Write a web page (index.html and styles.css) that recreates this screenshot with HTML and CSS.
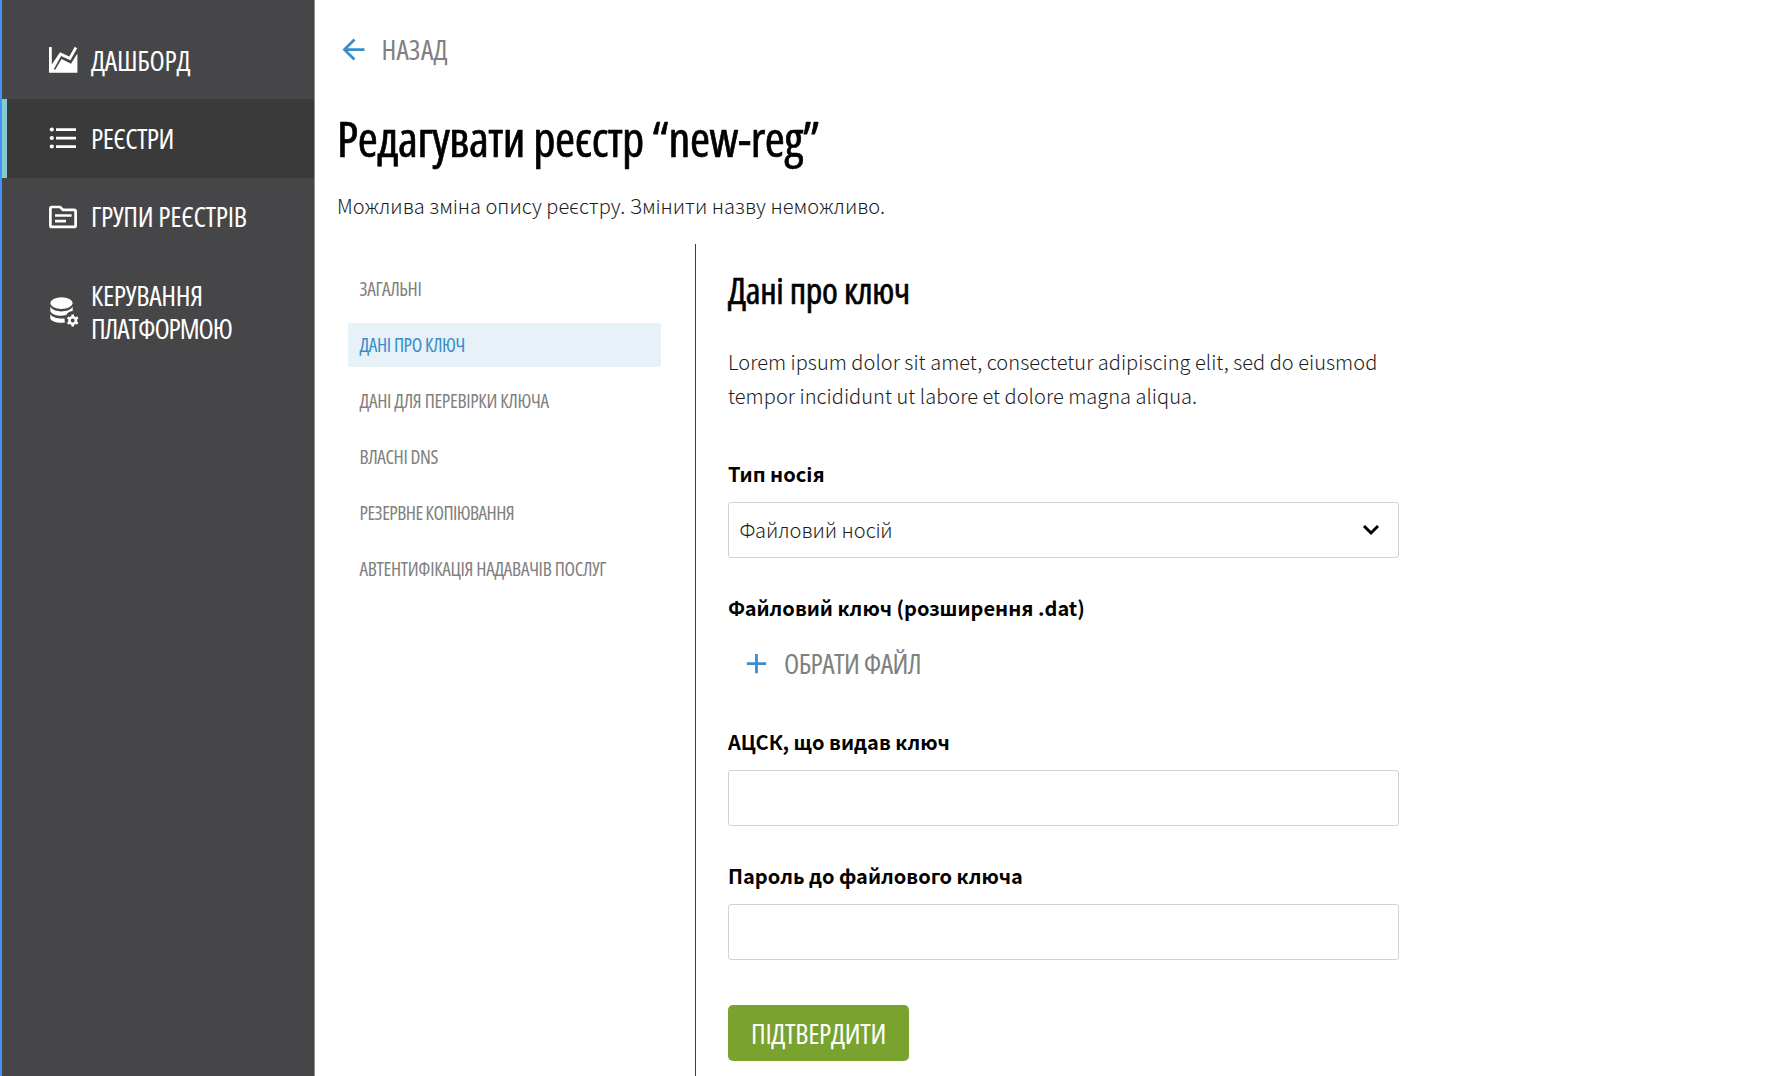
FILE: index.html
```html
<!DOCTYPE html>
<html lang="uk">
<head>
<meta charset="utf-8">
<title>Редагувати реєстр</title>
<link rel="stylesheet" href="styles.css">
</head>
<body>
<div class="app">
  <nav class="sidebar">
    <a class="nav-item"><svg class="nav-icon" viewBox="0 0 34 34"><path d="M3 4h2.800v17.500L14 9.200l9.300 4.200 5.500-9.600 2.400 1.400-6.800 12-9.300-4.200L7.600 26.400h1.800l6.200-10.400 9.400 4.800 6.400-10.200V29.700H3z"/></svg><span class="label">ДАШБОРД</span></a>
    <a class="nav-item active"><svg class="nav-icon" viewBox="0 0 34 34"><circle cx="5.800" cy="8.500" r="2.100"/><circle cx="5.800" cy="17" r="2.100"/><circle cx="5.800" cy="25.500" r="2.100"/><path d="M10 7.200h20v2.700H10zM10 15.700h20v2.700H10zM10 24.200h20v2.700H10z"/></svg><span class="label snug">РЕЄСТРИ</span></a>
    <a class="nav-item"><svg class="nav-icon" viewBox="0 0 34 34"><path class="line" d="M5.900 7h8.200l2.900 2.900h11.100q1.500 0 1.500 1.500v14q0 1.500-1.500 1.500H5.900q-1.500 0-1.500-1.500V8.500Q4.400 7 5.900 7z"/><path d="M9 14.200h16.600v2.600H9zM9 19.800h11v2.600H9z"/></svg><span class="label">ГРУПИ РЕЄСТРІВ</span></a>
    <a class="nav-item"><svg class="nav-icon" viewBox="0 0 34 34"><ellipse cx="15.500" cy="8.100" rx="11.200" ry="5.900"/><path d="M4.300 11.500c1.500 3.400 6.500 4.900 11.200 4.900s9.700-1.500 11.200-4.900v4.600c-3.500.2-5.200 1.900-6.300 4-4.600 1.400-14.100.8-16.100-3.800z"/><path d="M4.300 19.300c2.300 3.400 8.200 4.600 14.300 4.100-.2 1.500 0 2.800.4 4.100-6 .9-13.300-.4-14.700-4z"/><circle class="line gear" cx="26.700" cy="25.500" r="3.200"/><path class="line gear" d="M26.700 19.600v2.300M26.700 29.100v2.300M21.600 22.500l2.100 1.200M29.700 27.300l2.100 1.200M21.600 28.500l2.100-1.200M29.700 23.700l2.100-1.200"/></svg><span class="label">КЕРУВАННЯ<br><span class="tight">ПЛАТФОРМОЮ</span></span></a>
  </nav>
  <main class="main">
    <a class="back"><svg class="icon" viewBox="0 0 24 24"><path d="M20 11H7.830l5.590-5.590L12 4l-8 8 8 8 1.410-1.410L7.830 13H20z"/></svg><span class="label loose">НАЗАД</span></a>
    <h1 class="title">Редагувати реєстр “new-reg”</h1>
    <p class="text">Можлива зміна опису реєстру. Змінити назву неможливо.</p>
    <div class="columns">
      <ul class="steps">
        <li>ЗАГАЛЬНІ</li>
        <li class="current">ДАНІ ПРО КЛЮЧ</li>
        <li class="wide">ДАНІ ДЛЯ ПЕРЕВІРКИ КЛЮЧА</li>
        <li>ВЛАСНІ DNS</li>
        <li class="snug">РЕЗЕРВНЕ КОПІЮВАННЯ</li>
        <li class="wide">АВТЕНТИФІКАЦІЯ НАДАВАЧІВ ПОСЛУГ</li>
      </ul>
      <form class="form">
        <h2 class="subtitle">Дані про ключ</h2>
        <p class="text intro">Lorem ipsum dolor sit amet, consectetur adipiscing elit, sed do eiusmod<br>tempor incididunt ut labore et dolore magna aliqua.</p>
        <div class="field">
          <label>Тип носія</label>
          <div class="control"><span>Файловий носій</span><svg class="chevron" viewBox="0 0 18 12"><path d="M2 2l7 7 7-7"/></svg></div>
        </div>
        <div class="field">
          <label>Файловий ключ (розширення .dat)</label>
          <div class="file"><svg class="icon" viewBox="0 0 24 24"><path d="M19 13h-6v6h-2v-6H5v-2h6V5h2v6h6z"/></svg><span class="label snug">ОБРАТИ ФАЙЛ</span></div>
        </div>
        <div class="field">
          <label>АЦСК, що видав ключ</label>
          <div class="control"></div>
        </div>
        <div class="field">
          <label>Пароль до файлового ключа</label>
          <div class="control"></div>
        </div>
        <button class="submit" type="button"><span class="label">ПІДТВЕРДИТИ</span></button>
      </form>
    </div>
  </main>
</div>
</body>
</html>
```
FILE: styles.css
```css
* { box-sizing: border-box; }
body {
  margin: 0;
  background: #fff;
  color: #000;
  font: 300 20px/33.500px "Noto Sans CJK SC", "Noto Sans", sans-serif;
  overflow: hidden;
}
.app { display: flex; height: 1076px; overflow: hidden; }
h1, h2, p, ul { margin: 0; padding: 0; }

.label, .title, .subtitle, .steps {
  font-family: "Open Sans", sans-serif;
  font-stretch: 75%;
  font-weight: 400;
  white-space: nowrap;
}
.label { font-size: 28px; letter-spacing: -0.270px; }
.label.snug { letter-spacing: -0.600px; }
.label.loose { letter-spacing: 0.100px; }
.tight { letter-spacing: -1.110px; }

.sidebar {
  flex: none;
  width: 315px;
  padding-top: 21px;
  background: #464648;
  border-left: 2px solid #4294f7;
  border-right: 1px solid #8b8d8b;
}
.nav-item {
  display: flex;
  align-items: center;
  gap: 11px;
  padding: 22.300px 0 22.300px 39px;
  border-left: 5px solid transparent;
  color: #fff;
}
.nav-item:first-child { padding-bottom: 21.800px; }
.nav-item.active { background: #3a3a3a; border-left-color: #85c9d3; }
.nav-icon { flex: none; width: 34px; height: 34px; fill: #fff; }
.line { fill: none; stroke: #fff; stroke-width: 2.700; }
.gear { stroke-width: 2.600; }

.main { flex: 1; display: flex; flex-direction: column; padding: 32.500px 0 0 22px; }
.back { display: flex; align-items: center; gap: 11.500px; color: #808080; }
.icon { flex: none; width: 33px; height: 33px; fill: #3a8ccc; }
.title {
  margin-top: 38.500px;
  font-size: 48.500px;
  line-height: 67px;
  letter-spacing: -0.450px;
  -webkit-text-stroke: 0.700px #000;
}
.text { color: #1c1c1c; letter-spacing: 0.040px; white-space: nowrap; }
.title + .text { margin-top: 17px; }

.columns { display: flex; flex: 1; margin-top: 21.500px; }
.steps {
  display: flex;
  flex-direction: column;
  gap: 12px;
  width: 359px;
  padding: 23px 34px 0 11px;
  border-right: 1px solid #3c3c3e;
  list-style: none;
  font-size: 19.300px;
  line-height: 44px;
  letter-spacing: -0.380px;
  color: #808080;
}
.steps li { padding-left: 11.500px; border-radius: 3px; }
.steps .current { background: #e6f1f8; color: #378ccc; }
.steps .wide { letter-spacing: -0.300px; }
.steps .snug { letter-spacing: -0.550px; }

.form { display: flex; flex-direction: column; width: 703px; padding: 24px 0 0 32px; }
.subtitle {
  font-size: 36px;
  line-height: 46px;
  letter-spacing: -0.320px;
  -webkit-text-stroke: 0.600px #000;
}
.intro { margin-top: 31.500px; }
.field { margin-top: 44.500px; }
.field + .field { margin-top: 33.200px; }
label { display: block; font-weight: 700; }
.control {
  display: flex;
  align-items: center;
  justify-content: space-between;
  height: 56px;
  margin-top: 11.500px;
  padding: 0 18px 0 10.500px;
  border: 1.500px solid #d0d1dc;
  border-radius: 3px;
  color: #1c1c1c;
}
.chevron { width: 18px; height: 12px; fill: none; stroke: #000; stroke-width: 3; }
.file {
  display: flex;
  align-items: center;
  gap: 11.500px;
  height: 56px;
  margin-top: 11.500px;
  padding-left: 11.500px;
  color: #808080;
}
.submit {
  align-self: flex-start;
  width: 181px;
  height: 56px;
  margin-top: 44.700px;
  padding: 0;
  border: 0;
  border-radius: 5px;
  background: #79a22f;
  color: #fff;
}
.submit .label { letter-spacing: -0.330px; }
```
